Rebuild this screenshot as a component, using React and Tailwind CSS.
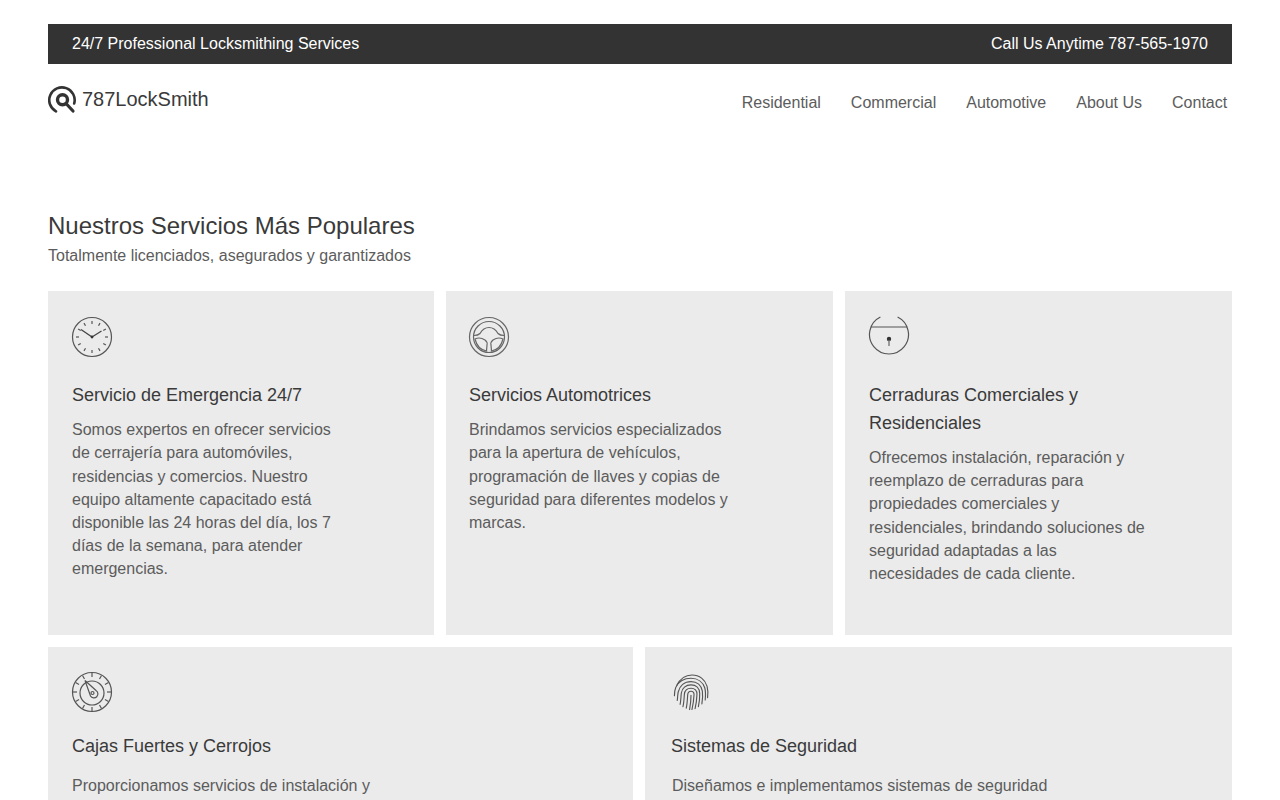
const clockTicks = Array.from({ length: 12 }, (_, i) => i * 30);

function ClockIcon() {
  return (
    <svg width="42" height="42" viewBox="0 0 42 42" fill="none" stroke="#555" strokeWidth="1.2">
      <circle cx="21" cy="21" r="19.5" />
      {clockTicks.map((a) => (
        <line key={a} x1="21" y1="5" x2="21" y2="8" transform={`rotate(${a} 21 21)`} />
      ))}
      <path d="M21 21 10 13.500M21 21l9.500-6" strokeWidth="1.300" stroke="#444" />
      <circle cx="21" cy="21" r="1.400" fill="#333" stroke="none" />
    </svg>
  );
}

function WheelIcon() {
  return (
    <svg width="42" height="42" viewBox="0 0 42 42" fill="none" stroke="#666" strokeWidth="1.2">
      <circle cx="21" cy="21" r="19.500" />
      <circle cx="21" cy="21" r="15.500" />
      <path d="M6 19.500C8.500 19.500 10.500 19 12 17.500 14.500 13 18 11.500 21 11.500s6.500 1.500 9 6c1.500 1.500 3.500 2 6 2" />
      <path d="M7 23C10 21.500 14 22 17 24 19 25.500 19.500 27 19 29L18.500 35C13 34 8.500 29.500 7 23Z" />
      <path d="M35 23C32 21.500 28 22 25 24 23 25.500 22.500 27 23 29L23.500 35C29 34 33.500 29.500 35 23Z" />
    </svg>
  );
}

function SafeLockIcon() {
  return (
    <svg width="42" height="42" viewBox="0 0 42 42" fill="none" stroke="#555" strokeWidth="1.2">
      <path d="M12.400 1A19.500 19.500 0 1 0 29.600 1" />
      <line x1="3" y1="11" x2="39" y2="11" />
      <circle cx="21" cy="23" r="2.200" fill="#333" stroke="none" />
      <line x1="21" y1="24" x2="21" y2="30" strokeWidth="1.400" stroke="#777" />
    </svg>
  );
}

function GaugeIcon() {
  return (
    <svg width="42" height="42" viewBox="0 0 42 42" fill="none" stroke="#555" strokeWidth="1.2">
      <circle cx="21" cy="21" r="19.500" />
      {[-120, -90, -60, -30, 0, 30, 60, 90, 120, 150, 180, -150].map((a) => (
        <line key={a} x1="21" y1="2" x2="21" y2="6" transform={`rotate(${a} 21 21)`} />
      ))}
      <circle cx="21" cy="22" r="12" />
      <path d="M14 9.500 25 19.500a4 4 0 1 1-5.500 5.500Z" />
      <circle cx="21.500" cy="22" r="1.500" />
    </svg>
  );
}

function FingerprintIcon() {
  return (
    <svg width="36" height="38" viewBox="0 0 38 40" fill="none" stroke="#555" strokeWidth="1.200" strokeLinecap="round">
      <path d="M4 13C8 5 14 2 20 2c8 0 14 5 16 12 1 4 1 8 .5 12" />
      <path d="M1.500 24c0-3 .2-6 1.500-9C6 9 12 5.500 19 5.500c7 0 12.500 4 14.500 10 1 3.500 1 8 .5 13" />
      <path d="M4.500 29c.5-3 .3-6 1-9C7 13.500 12 9 19 9c6.500 0 11 4 12 10 .5 4 .2 9-.5 13.500" />
      <path d="M7.500 33c.8-3 .8-8 1.300-12C9.500 16 13.500 12.500 19 12.500s9 3.500 9.200 9c.1 5-.5 10-1.400 14" />
      <path d="M10.500 35.500c1-4 1.200-9 1.500-13 .3-4 3-6.500 7-6.500s6.500 2.500 6.300 6.500c-.2 5-.8 10-2 15" />
      <path d="M14 37c1-4 1.200-9 1.500-14 .2-2.500 1.500-3.800 3.500-3.800s3.300 1.500 3.200 3.800c-.2 5-.9 10-2.200 15.500" />
      <path d="M17.500 38.500c1-5 1.500-10 1.500-15" />
    </svg>
  );
}

function LogoIcon() {
  return (
    <svg width="28" height="28" viewBox="0 0 28 28" fill="none" stroke="#333" className="mt-[2px] mr-[2px] shrink-0">
      <path d="M8 25.300A12.700 12.700 0 1 1 26.200 17.500" strokeWidth="2.600" strokeLinecap="round" />
      <circle cx="14.500" cy="13.800" r="5" strokeWidth="3.400" />
      <path d="M18 17.500 25 25" strokeWidth="3.200" strokeLinecap="round" />
    </svg>
  );
}

function Card({ icon, title, text, className = "", iconClass = "", titleClass = "", textClass = "" }) {
  return (
    <div className={`bg-[#ebebeb] ${className}`}>
      <div className={iconClass}>{icon}</div>
      <h3 className={`text-[18px] leading-[28px] text-[#3a3a3a] font-normal ${titleClass}`}>{title}</h3>
      <p className={`text-[16px] leading-[23.2px] text-[#5c5c5c] ${textClass}`}>{text}</p>
    </div>
  );
}

export default function App() {
  return (
    <div className="h-[800px] overflow-hidden bg-white px-12 pt-6 font-['Liberation_Sans',Arial,sans-serif]">
      <div className="flex h-10 items-center justify-between bg-[#333] px-6 text-[16px] text-white">
        <span>24/7 Professional Locksmithing Services</span>
        <span>Call Us Anytime 787-565-1970</span>
      </div>

      <header className="flex items-start justify-between pt-5">
        <div className="flex items-center gap-1">
          <LogoIcon />
          <span className="text-[20px] leading-[30px] text-[#3a3a3a]">787LockSmith</span>
        </div>
        <nav className="flex gap-[30px] pr-[4.800px] pt-[7px] text-[16px] leading-[24px] text-[#5c5c5c]">
          <span>Residential</span>
          <span>Commercial</span>
          <span>Automotive</span>
          <span>About Us</span>
          <span>Contact</span>
        </nav>
      </header>

      <section className="pt-[95px]">
        <h2 className="text-[24px] leading-[32px] text-[#3a3a3a] font-normal">Nuestros Servicios Más Populares</h2>
        <p className="pt-[2px] text-[16px] leading-[24px] text-[#5c5c5c]">Totalmente licenciados, asegurados y garantizados</p>

        <div className="mt-[23px] grid grid-cols-[386px_387px_387px] gap-3">
          <Card
            className="h-[344px] pl-6 pt-[25px]"
            icon={<ClockIcon />}
            iconClass="h-[42px] -ml-[1px]"
            title="Servicio de Emergencia 24/7"
            titleClass="pt-[23px]"
            textClass="max-w-[278px] pt-[9.200px]"
            text="Somos expertos en ofrecer servicios de cerrajería para automóviles, residencias y comercios. Nuestro equipo altamente capacitado está disponible las 24 horas del día, los 7 días de la semana, para atender emergencias."
          />
          <Card
            className="h-[344px] pl-[23px] pt-[25px]"
            icon={<WheelIcon />}
            iconClass="h-[42px] -ml-[1px]"
            title="Servicios Automotrices"
            titleClass="pt-[23px]"
            textClass="max-w-[278px] pt-[9.200px]"
            text="Brindamos servicios especializados para la apertura de vehículos, programación de llaves y copias de seguridad para diferentes modelos y marcas."
          />
          <Card
            className="h-[344px] pl-6 pt-[25px]"
            icon={<SafeLockIcon />}
            iconClass="h-[42px] -ml-[1px]"
            title="Cerraduras Comerciales y Residenciales"
            titleClass="pt-[23px] max-w-[278px]"
            textClass="max-w-[278px] pt-[9px]"
            text="Ofrecemos instalación, reparación y reemplazo de cerraduras para propiedades comerciales y residenciales, brindando soluciones de seguridad adaptadas a las necesidades de cada cliente."
          />
        </div>

        <div className="mt-3 grid grid-cols-[585px_587px] gap-3">
          <Card
            className="h-[344px] pl-6 pt-[24px]"
            icon={<GaugeIcon />}
            iconClass="h-[42px] -ml-[1px]"
            title="Cajas Fuertes y Cerrojos"
            titleClass="pt-[19px]"
            textClass="max-w-[310px] pt-[14px]"
            text="Proporcionamos servicios de instalación y"
          />
          <Card
            className="h-[344px] pl-[26px] pt-[26px]"
            icon={<FingerprintIcon />}
            iconClass="h-[40px] ml-[2px]"
            title="Sistemas de Seguridad"
            titleClass="pt-[19px]"
            textClass="max-w-[390px] pt-[14px] pl-[1px]"
            text="Diseñamos e implementamos sistemas de seguridad"
          />
        </div>
      </section>
    </div>
  );
}
